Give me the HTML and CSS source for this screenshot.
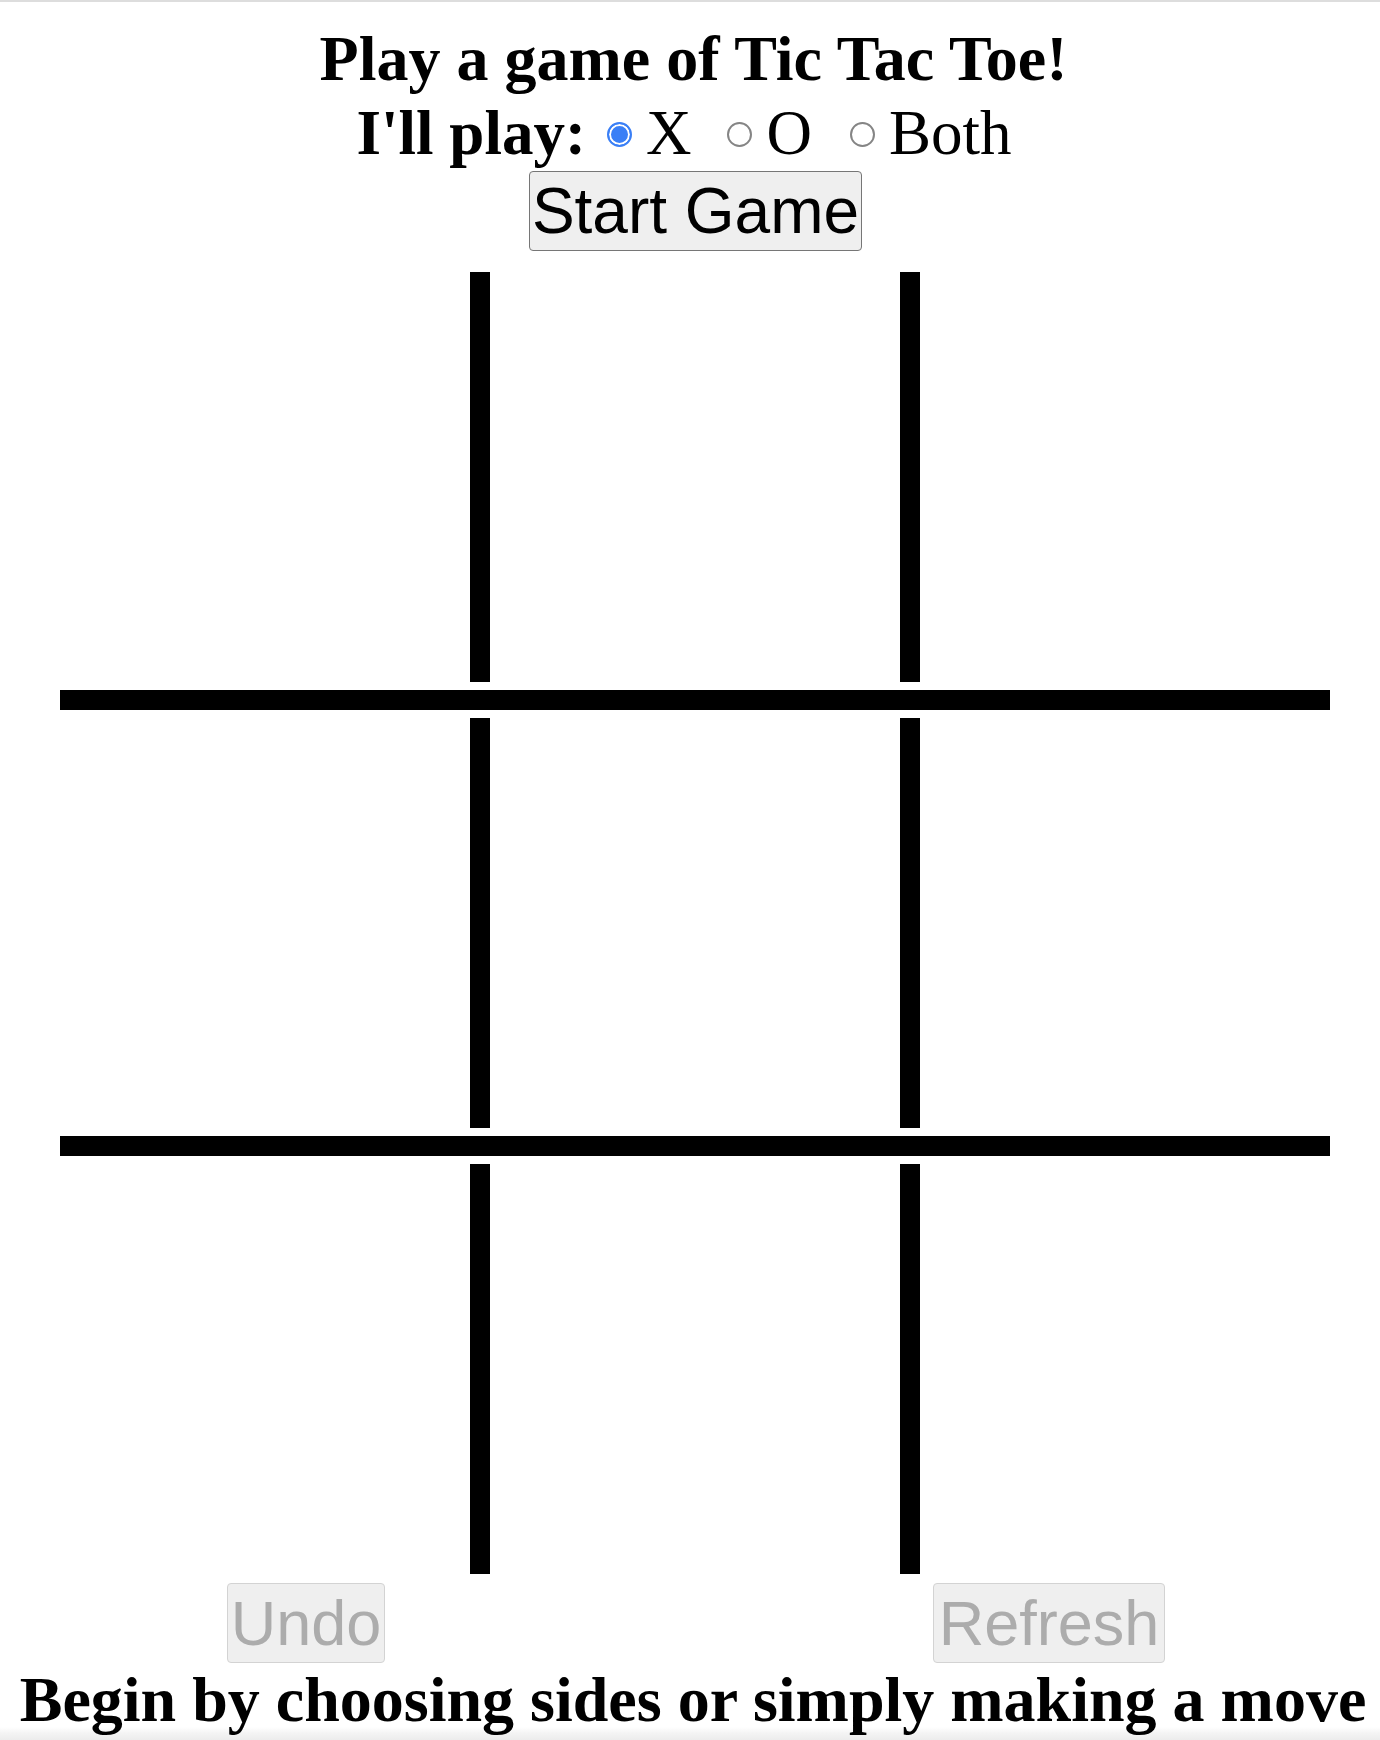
FILE: index.html
```html
<!DOCTYPE html>
<html lang="en">
<head>
<meta charset="utf-8">
<title>Tic Tac Toe</title>
<link rel="stylesheet" href="styles.css">
</head>
<body>
<div class="topbar"></div>
<div class="page">
  <h1 class="title">Play a game of Tic Tac Toe!</h1>
  <div class="choose"><b class="choose-label">I'll play:</b><input type="radio" name="side" class="radio first" checked><span class="opt">X</span><input type="radio" name="side" class="radio second"><span class="opt">O</span><input type="radio" name="side" class="radio third"><span class="opt">Both</span></div>
  <div class="start-row"><button class="btn start">Start Game</button></div>
  <div class="board">
    <div class="row"><div class="cell"></div><div class="cell mid"></div><div class="cell"></div></div>
    <div class="hline"></div>
    <div class="row"><div class="cell"></div><div class="cell mid"></div><div class="cell"></div></div>
    <div class="hline"></div>
    <div class="row"><div class="cell"></div><div class="cell mid"></div><div class="cell"></div></div>
  </div>
  <div class="controls">
    <button class="btn undo" disabled>Undo</button>
    <button class="btn refresh" disabled>Refresh</button>
  </div>
</div>
<div class="status">Begin by choosing sides or simply making a move</div>
</body>
</html>
```

FILE: styles.css
```css
html {
  background: linear-gradient(to bottom, #ffffff 0, #ffffff 1727px, #f4f4f4 1733px, #ececec 1740px) no-repeat;
  min-height: 1740px;
}
body {
  margin: 0;
  font-family: "Liberation Serif", "Times New Roman", serif;
  color: #000;
}
.topbar {
  height: 2px;
  background: #dddddd;
}
.page {
  width: 1270px;
  margin-left: 60px;
}
.title {
  margin: 19px 0 0;
  padding-right: 3px;
  font-size: 64px;
  font-weight: bold;
  line-height: 75px;
  text-align: center;
}
.choose {
  font-size: 63px;
  line-height: 74px;
  text-align: center;
  padding-right: 22px;
  white-space: nowrap;
}
.choose-label {
  font-weight: bold;
}
.radio {
  -webkit-appearance: none;
  appearance: none;
  display: inline-block;
  box-sizing: border-box;
  width: 25px;
  height: 25px;
  margin: 0 14px 0 0;
  vertical-align: 7px;
  border: 2px solid #858585;
  border-radius: 50%;
  background: #fff;
}
.radio:checked {
  border-color: #3a7ff6;
  background: #3a7ff6;
  box-shadow: inset 0 0 0 2px #fff;
}
.radio.first { margin-left: 21px; }
.radio.second { margin-left: 36px; }
.radio.third { margin-left: 38px; }
.start-row {
  display: flex;
  justify-content: center;
  margin-top: 1px;
  padding-left: 1px;
}
.btn {
  box-sizing: border-box;
  height: 80px;
  padding: 0;
  font-family: "Liberation Sans", Arial, sans-serif;
  font-size: 63px;
  line-height: 78px;
  color: #000;
  background: #efefef;
  border: 1px solid #767676;
  border-radius: 4px;
  text-align: center;
}
.start {
  width: 333px;
  font-size: 64px;
}
.board {
  margin-top: 21px;
}
.row {
  display: flex;
  height: 410px;
}
.cell {
  width: 410px;
  height: 410px;
}
.cell.mid {
  border-left: 20px solid #000;
  border-right: 20px solid #000;
}
.hline {
  height: 20px;
  margin: 8px 0;
  background: #000;
}
.controls {
  display: flex;
  gap: 548px;
  margin-top: 9px;
  padding-left: 167px;
}
.btn:disabled {
  color: #acacac;
  background: #efefef;
  border-color: #d3d3d3;
}
.undo { width: 158px; }
.refresh { width: 232px; }
.status {
  padding-left: 6px;
  font-size: 64px;
  font-weight: bold;
  line-height: 74px;
  text-align: center;
  white-space: nowrap;
}
```
